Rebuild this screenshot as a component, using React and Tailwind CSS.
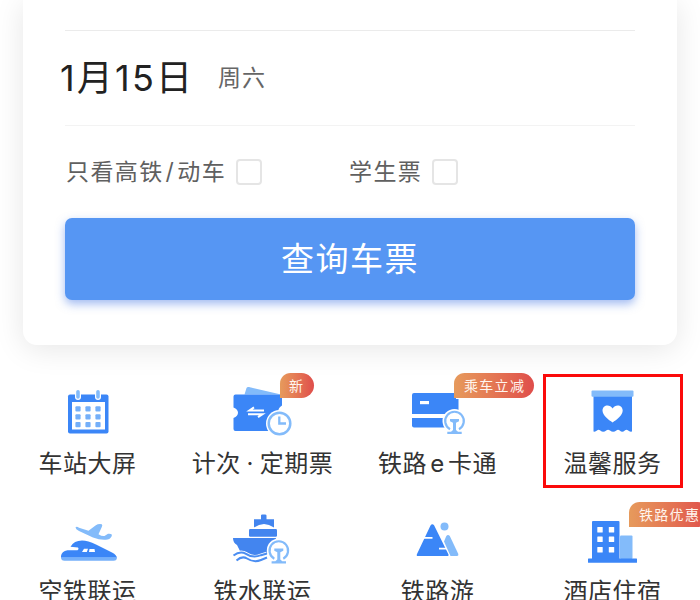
const BLUE = "#3b86f7";
const LIGHT = "#83bbfa";

function CalendarIcon() {
  return (
    <svg width="175" height="70" viewBox="0 375 175 70" fill="none">
      <rect x="68" y="394.5" width="40.5" height="39" rx="2" fill={BLUE} />
      <rect x="72" y="402" width="33" height="27.5" fill="#fff" />
      {[78, 98].map((x) => (
        <g key={x} strokeLinecap="round">
          <path d={`M${x} 392.5V397`} stroke="#fff" strokeWidth="6" />
          <path d={`M${x} 391.8V397`} stroke={LIGHT} strokeWidth="3.6" />
        </g>
      ))}
      {[408.8, 416.8, 424.6].map((y) =>
        [78, 88, 98].map((x) => (
          <rect key={`${x}-${y}`} x={x - 2.6} y={y - 2.6} width="5.2" height="5.2" rx="1" fill="#74aff9" />
        ))
      )}
    </svg>
  );
}

function TicketIcon() {
  return (
    <svg width="175" height="70" viewBox="175 375 175 70" fill="none">
      <path d="M244.500 394.5L246.500 388Q247.200 386.500 249 387L281 394.500Z" fill={LIGHT} />
      <path d="M235.500 394.500H282V405.500Q277.500 408 278.500 413L281 431H235.500Q233.500 431 233.500 429V418Q238 416 238 412.800T233.500 407.500V396.500Q233.500 394.500 235.500 394.500Z" fill={BLUE} />
      <path d="M264 410.400H249.500L254 407.400M248 414.200H262.500L258 417.200" stroke="#fff" strokeWidth="2" />
      <circle cx="279.500" cy="423.500" r="13.500" fill="#fff" />
      <circle cx="279.500" cy="423.500" r="10.800" stroke={LIGHT} strokeWidth="2.500" />
      <path d="M279.300 416.500V423.500H286" stroke={LIGHT} strokeWidth="2.300" />
    </svg>
  );
}

function RailMark({ cx, cy }) {
  return (
    <g>
      <circle cx={cx} cy={cy} r="12" fill="#fff" />
      <path
        d={`M${cx - 4.5} ${cy + 8.2}A9.300 9.300 0 1 1 ${cx + 4.5} ${cy + 8.2}`}
        stroke={LIGHT}
        strokeWidth="2.200"
      />
      <path
        d={`M${cx - 4.5} ${cy - 2}H${cx + 4.5}V${cy + 0.3}L${cx + 1.500} ${cy + 1.800}V${cy + 9}L${cx + 3.5} ${cy + 10.8}H${cx + 7.2}V${cy + 13}H${cx - 7.2}V${cy + 10.8}H${cx - 3.5}L${cx - 1.500} ${cy + 9}V${cy + 1.800}L${cx - 4.5} ${cy + 0.3}Z`}
        fill={LIGHT}
      />
    </g>
  );
}

function CardIcon() {
  return (
    <svg width="175" height="70" viewBox="350 375 175 70" fill="none">
      <path d="M414 393H456V399H458.500V414H412V395Q412 393 414 393Z" fill={BLUE} />
      <path d="M412 418H445V427.500H414Q412 427.500 412 425.500Z" fill={BLUE} />
      <rect x="420" y="401" width="9" height="3.200" fill="#fff" />
      <RailMark cx={454.5} cy={421} />
    </svg>
  );
}

function HeartIcon() {
  return (
    <svg width="175" height="70" viewBox="525 375 175 70" fill="none">
      <path d="M593.500 396H632V431.500Q629.500 432 628.200 430.500Q626.500 429.200 624.800 430.500Q622.200 433 619.800 430.500Q618 429.200 616.300 430.500Q613.200 433 610 430.500Q608 429.200 606.200 430.500Q603.200 433 600.300 430.500Q598.500 429.200 597 430.500Q595.500 432 593.500 431.500Z" fill={BLUE} />
      <rect x="591.500" y="390.500" width="42" height="6.300" rx="1" fill={LIGHT} />
      <path d="M612.600 422.500C608.500 420 602.500 415.500 602.500 410.600C602.500 404.800 609.800 403.800 612.600 408.500C615.400 403.800 622.700 404.800 622.700 410.600C622.700 415.500 616.700 420 612.600 422.500Z" fill="#fff" />
    </svg>
  );
}

function AirRailIcon() {
  return (
    <svg width="175" height="70" viewBox="0 503 175 70" fill="none">
      <path d="M75.500 527.200Q77 526.300 79 527.800L88.500 530.800L95.500 525.500Q98.500 523.500 101.800 524.300Q102.800 525 101.800 527L98.500 534.200Q102 536.500 104.500 536L108 533.800Q110.500 533.300 112 534.700Q111.500 538.500 107.500 539.500Q101 540.500 93 537.500L79 531Q75.500 529.300 75.500 527.200Z" fill={LIGHT} />
      <path d="M70.500 546.800Q74 540.500 82 540.500Q88 540.500 96 544.500L112 552.500Q117 555.200 116.800 557.800H61V556Q61.500 551.500 67.500 550.300H77.500Q79.500 549 78 547.500Z" fill={BLUE} />
      <path d="M61 557.200H117Q117 560.800 113.500 560.800H64.500Q61 560.800 61 557.200Z" fill="#75b0fa" />
      <path d="M84 548.800H88L86.800 552H82ZM89.500 549H94.500L95 552H89Z" fill="#fff" />
    </svg>
  );
}

function ShipRailIcon() {
  return (
    <svg width="175" height="70" viewBox="175 503 175 70" fill="none">
      <path d="M254 527.500V519.200H261V515.500Q261 514.500 262.200 514.500H265Q266.500 514.500 266.500 515.500V519.200H274V527.500Q264 520.500 254 527.500Z" fill="#4385ef" />
      <rect x="249" y="529" width="28" height="7.800" rx="1.200" fill="#4385ef" />
      <path d="M233 538H276L271 554.200Q266 552.500 259 555Q252 557.500 247 553.500Q244 551.500 240.500 552L237 545Q233 543 233 538Z" fill="#4385ef" />
      <path d="M233.500 556Q240 551 246 554.500Q253 559.500 261 556L267 554" stroke="#fff" strokeWidth="5" />
      <path d="M233.500 555.500Q240 550.500 246 553.800Q253 558.500 261 555.200L267 553.500M236.500 560.500Q242 555.500 247 558.500Q254 563 261 560L267 557.500" stroke="#4b8ef2" strokeWidth="2" />
      <RailMark cx={278.8} cy={550.5} />
    </svg>
  );
}

function TravelIcon() {
  return (
    <svg width="175" height="70" viewBox="350 503 175 70" fill="none">
      <path d="M430.500 525.500Q432.300 523 434.200 525.500L448.500 554.500Q449 556 447.500 556H418Q416 556 417 554Z" fill={BLUE} />
      <path d="M423 537.800H432.500M439 548.700H448" stroke="#fff" strokeWidth="1.800" />
      <circle cx="444.500" cy="526.500" r="4" fill={LIGHT} />
      <path d="M444 541.500L446.300 536Q448 533.800 449.800 536L458.300 554Q458.800 556 457 556H450.500Z" fill={LIGHT} />
    </svg>
  );
}

function HotelIcon() {
  return (
    <svg width="175" height="70" viewBox="525 503 175 70" fill="none">
      <rect x="620" y="535.500" width="12.500" height="23.500" rx="1" fill={LIGHT} />
      <rect x="592" y="521" width="27.500" height="39" rx="1" fill={BLUE} />
      <rect x="588" y="558.500" width="49" height="4.300" rx="0.500" fill={BLUE} />
      {[529.8, 539.3, 549.8].map((y) =>
        [600, 611.5].map((x) => (
          <rect key={`${x}-${y}`} x={x - 2.700} y={y - 2.700} width="5.400" height="5.400" rx="0.500" fill="#fff" />
        ))
      )}
    </svg>
  );
}

const badgeBase =
  "absolute top-0 flex h-[25px] items-center rounded-tl-[11px] rounded-tr-[13px] rounded-br-[13px] bg-linear-to-r from-[#e69a5c] to-[#df4d4b] whitespace-nowrap text-[14px] tracking-[1.3px] text-[#fff5ee]";

const services = [
  { label: "车站大屏", Icon: CalendarIcon },
  { label: "计次 · 定期票", Icon: TicketIcon, badge: "新", badgeClass: "left-[105px] w-[34px] pl-[9px]", spacing: "[word-spacing:-1.5px]" },
  { label: "铁路 e 卡通", Icon: CardIcon, badge: "乘车立减", badgeClass: "left-[104px] w-[80px] pl-[10px]", spacing: "[word-spacing:-4px]" },
  { label: "温馨服务", Icon: HeartIcon, highlight: true },
  { label: "空铁联运", Icon: AirRailIcon },
  { label: "铁水联运", Icon: ShipRailIcon },
  { label: "铁路游", Icon: TravelIcon },
  { label: "酒店住宿", Icon: HotelIcon, badge: "铁路优惠", badgeClass: "left-[104px] w-[81px] pl-[10px] mt-px" },
];

function Service({ label, Icon, badge, badgeClass, highlight, spacing = "" }) {
  return (
    <div className="relative flex h-[128px] flex-col items-center pt-[2px]">
      <Icon />
      <span className={`mt-[1px] h-[36px] text-[24px] leading-[36px] tracking-[0.5px] whitespace-nowrap text-[#333] ${spacing}`}>
        {label}
      </span>
      {badge && <span className={`${badgeBase} ${badgeClass}`}>{badge}</span>}
      {highlight && (
        <div className="absolute top-[1px] left-[18px] h-[114px] w-[140px] border-3 border-[#fb0a0a]" />
      )}
    </div>
  );
}

function Checkbox({ children }) {
  return (
    <label className="flex items-center gap-[10px] text-[23px] leading-[36px] tracking-[1.4px] text-[#606060]">
      <span>{children}</span>
      <span className="h-[26px] w-[26px] rounded-[4px] border-2 border-[#e5e5e5] bg-white" />
    </label>
  );
}

export default function App() {
  return (
    <div className="h-[600px] w-[700px] overflow-hidden bg-white font-['Inter','Noto_Sans_CJK_SC',sans-serif]">
      <main className="mx-[23px] h-[345px] rounded-b-[14px] bg-white px-[42px] pt-[30px] shadow-[0_4px_30px_rgba(0,0,0,0.10)]">
        <div className="flex h-[96px] items-center border-y border-t-[#ebebeb] border-b-[#f3f3f3]">
          <span className="-ml-[5px] w-[158px] text-[36px] tracking-[2.2px] whitespace-nowrap text-[#222]">1月15日</span>
          <span className="text-[23px] tracking-[1px] text-[#666]">周六</span>
        </div>
        <div className="flex h-[92px] items-center">
          <div className="w-[284px] pl-px">
            <Checkbox>
              只看高铁<span className="mx-[2px]">/</span>动车
            </Checkbox>
          </div>
          <Checkbox>学生票</Checkbox>
        </div>
        <button className="flex h-[82px] w-[570px] items-center justify-center rounded-[7px] bg-[#5696f3] pt-[2px] text-[33px] tracking-[1.5px] text-white shadow-[0_4px_10px_rgba(70,120,230,0.5)]">
          查询车票
        </button>
      </main>
      <section className="grid grid-cols-4 pt-[28px]">
        {services.map((service) => (
          <Service key={service.label} {...service} />
        ))}
      </section>
    </div>
  );
}
